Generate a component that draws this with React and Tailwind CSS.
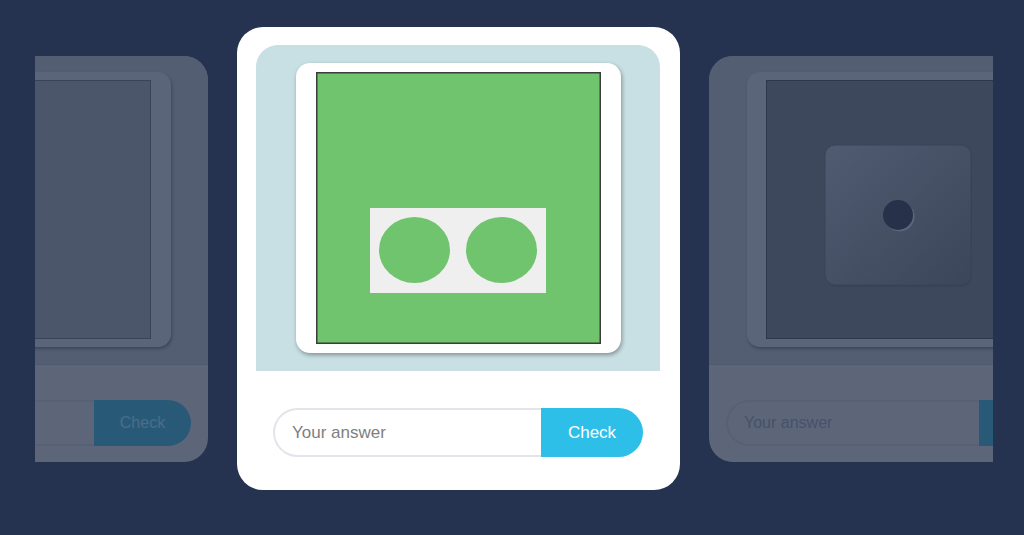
import React from 'react';

function GreenPicture() {
  return (
    <svg width="285" height="272" viewBox="0 0 285 272" className="block">
      <rect x="0.75" y="0.75" width="283.5" height="270.5" fill="#70c46e" stroke="#3a3d3a" strokeWidth="1.5" />
      <rect x="54" y="136" width="176" height="85" fill="#efefef" />
      <ellipse cx="98.5" cy="178" rx="35.5" ry="33" fill="#70c46e" />
      <ellipse cx="185.5" cy="178" rx="35.5" ry="33" fill="#70c46e" />
    </svg>
  );
}

function DicePicture() {
  return (
    <svg width="270" height="259" viewBox="0 0 270 259" className="block">
      <defs>
        <linearGradient id="dice" x1="0" y1="0" x2="1" y2="1">
          <stop offset="0" stopColor="#4f5b71" />
          <stop offset="1" stopColor="#3c465a" />
        </linearGradient>
      </defs>
      <rect x="0.5" y="0.5" width="269" height="258" fill="#3e485c" stroke="#2f384b" />
      <rect x="60" y="67" width="146" height="140" rx="10" fill="#37415499" />
      <rect x="59" y="65" width="146" height="140" rx="10" fill="url(#dice)" stroke="#3a4457" />
      <circle cx="133.5" cy="136.5" r="15" fill="#5b677d" />
      <circle cx="132" cy="135" r="15" fill="#27314a" />
    </svg>
  );
}

function PlainPicture() {
  return (
    <svg width="270" height="259" viewBox="0 0 270 259" className="block">
      <rect x="0.5" y="0.5" width="269" height="258" fill="#4c566a" stroke="#394357" />
    </svg>
  );
}

function SideCard({ picture }) {
  return (
    <div className="w-[384px] h-[406px] shrink-0 rounded-[24px] bg-[#5d6679] overflow-hidden flex flex-col">
      <div className="h-[309px] bg-[#535e73] border-b border-[#515b6f] flex items-center justify-center">
        <div className="w-[309px] h-[275px] rounded-[13px] bg-[#5b6579] shadow-[1px_2px_3px_rgba(20,28,45,0.35)] flex items-center justify-center">
          {picture}
        </div>
      </div>
      <div className="px-[17px] pt-[35px]">
        <div className="flex h-[46px]">
          <input
            readOnly
            placeholder="Your answer"
            className="flex-1 min-w-0 rounded-l-full border-2 border-r-0 border-[#576175] bg-transparent pl-[16px] text-[16px] outline-none placeholder:text-[#46516a]"
          />
          <button className="w-[97px] shrink-0 rounded-r-full bg-[#285a78] text-[16px] text-[#4a6d8b]">
            Check
          </button>
        </div>
      </div>
    </div>
  );
}

function ActiveCard() {
  return (
    <div className="w-[443px] h-[463px] shrink-0 rounded-[26px] bg-white pt-[18px] pl-[19px] pr-[20px] flex flex-col">
      <div className="h-[326px] rounded-t-[22px] bg-[#c8dfe3] flex items-center justify-center">
        <div className="w-[325px] h-[290px] rounded-[14px] bg-white shadow-[1px_2px_4px_rgba(0,0,0,0.35)] flex items-center justify-center">
          <GreenPicture />
        </div>
      </div>
      <div className="mt-[37px] mx-[17px] flex h-[49px]">
        <input
          readOnly
          placeholder="Your answer"
          className="flex-1 min-w-0 rounded-l-full border-2 border-r-0 border-[#e3e5ea] bg-white pl-[17px] text-[17px] text-[#333] outline-none placeholder:text-[#7f7f7f]"
        />
        <button className="w-[102px] shrink-0 rounded-r-full bg-[#2ebfe9] text-[17px] text-white">
          Check
        </button>
      </div>
    </div>
  );
}

export default function App() {
  return (
    <div className="min-h-screen bg-[#253250] pt-[27px] pl-[35px] pr-[31px] font-['Liberation_Sans',Arial,sans-serif]">
      <div className="overflow-hidden">
        <div className="flex items-center gap-[29px] ml-[-211px]">
          <SideCard picture={<PlainPicture />} />
          <ActiveCard />
          <SideCard picture={<DicePicture />} />
        </div>
      </div>
    </div>
  );
}
